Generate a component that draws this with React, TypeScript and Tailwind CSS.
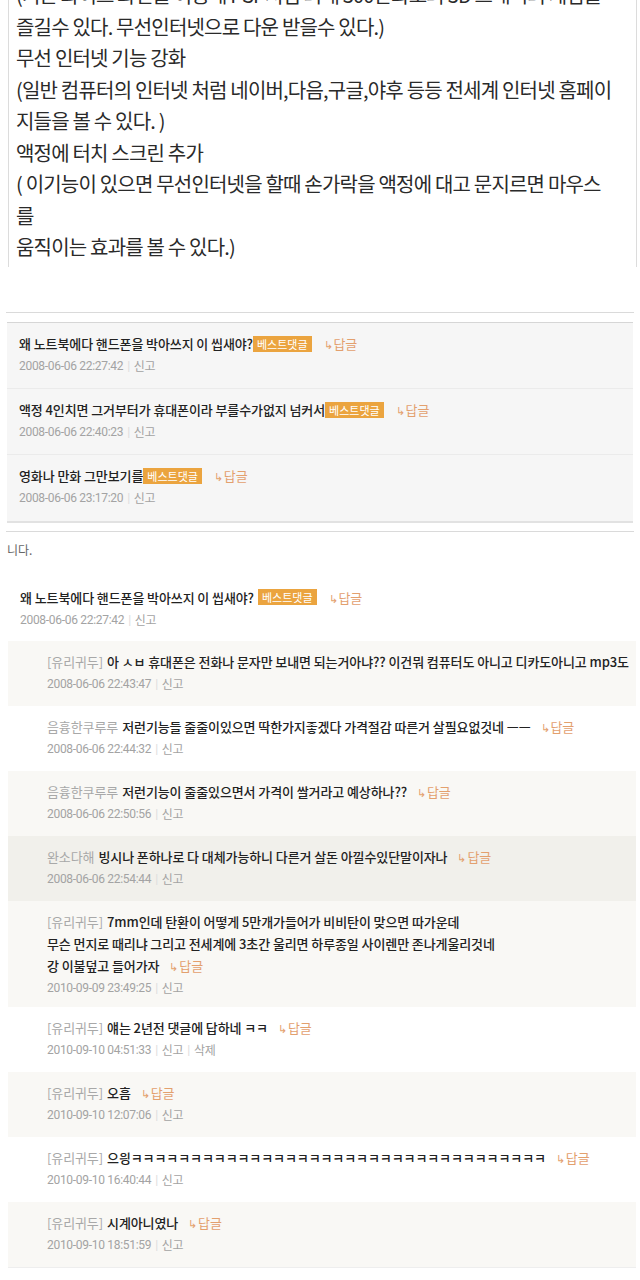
import React from "react";

const Badge = () => (
  <span className="inline-block bg-[#eba43f] text-white text-[11px] leading-[16px] px-[4px] font-normal tracking-[0px] align-[1px]">
    베스트댓글
  </span>
);

const ReplyLink = ({ ml = "ml-[12px]" }: { ml?: string }) => (
  <span className={`${ml} text-[#e3a06e] font-normal`}>
    <span className="text-[11px] mr-[1px]">↳</span>답글
  </span>
);

const DateLine = ({ date, del }: { date: string; del?: boolean }) => (
  <div className="h-[22px] flex items-center text-[12px] text-[#a3a3a3] font-['Roboto','Noto_Sans_CJK_KR',sans-serif] tracking-[-0.3px] whitespace-nowrap">
    {date}
    <span className="mx-[4px] text-[#dddddd]">|</span>
    <span className="font-['Noto_Sans_CJK_KR',sans-serif]">신고</span>
    {del && (
      <>
        <span className="mx-[4px] text-[#dddddd]">|</span>
        <span className="font-['Noto_Sans_CJK_KR',sans-serif]">삭제</span>
      </>
    )}
  </div>
);

type ReplyProps = {
  user: string;
  lines: string[];
  date: string;
  bg: string;
  del?: boolean;
  pb?: string;
};

const Reply = ({ user, lines, date, bg, del, pb = "pb-[11px]" }: ReplyProps) => (
  <div className={`${bg} pl-[39px] pt-[10px] ${pb} overflow-hidden`}>
    <div className="text-[13px] tracking-[-0.1px] whitespace-nowrap">
      {lines.map((l, i) => (
        <div key={i} className="h-[22px] flex items-center">
          {i === 0 && <span className="text-[#a8a8a8] font-normal mr-[4px]">{user}</span>}
          <span className="text-[#222] font-medium">{l}</span>
          {i === lines.length - 1 && <ReplyLink ml="ml-[10px]" />}
        </div>
      ))}
    </div>
    <DateLine date={date} del={del} />
  </div>
);

const GrayRow = ({ text, date, last }: { text: string; date: string; last?: boolean }) => (
  <div className={`pl-[12px] pt-[10px] h-[66px] ${last ? "" : "border-b border-[#ebebeb]"}`}>
    <div className="h-[22px] flex items-center text-[13px] tracking-[-0.1px] whitespace-nowrap text-[#222] font-medium">
      {text}
      <Badge />
      <ReplyLink />
    </div>
    <DateLine date={date} />
  </div>
);

export default function App() {
  const topLines = [
    "(기존 화이트 화면을 이용해 PSP처럼 최대 300만화소의 3D 그래픽의 게임을",
    "즐길수 있다. 무선인터넷으로 다운 받을수 있다.)",
    "무선 인터넷 기능 강화",
    "(일반 컴퓨터의 인터넷 처럼 네이버,다음,구글,야후 등등 전세계 인터넷 홈페이",
    "지들을 볼 수 있다. )",
    "액정에 터치 스크린 추가",
    "( 이기능이 있으면 무선인터넷을 할때 손가락을 액정에 대고 문지르면 마우스",
    "를",
    "움직이는 효과를 볼 수 있다.)",
  ];
  const kk = "ㅋ".repeat(35);
  return (
    <div className="w-[640px] h-[1280px] overflow-hidden bg-white font-['Noto_Sans_CJK_KR',sans-serif]">
      {/* article text box */}
      <div className="ml-[8px] w-[629px] h-[267px] border-x border-[#dcdcdc] overflow-hidden pl-[7px]">
        <div className="mt-[-21px] text-[20px] leading-[31.5px] text-[#2a2a2a] tracking-[-0.8px] whitespace-nowrap">
          {topLines.map((l, i) => (
            <div key={i}>{l}</div>
          ))}
        </div>
      </div>

      <div className="h-[45px]" />
      <div className="mx-[6px] h-[10px] border-t border-[#dadada]" />

      {/* best comments */}
      <div className="mx-[7px] border-t border-[#d6d6d6] bg-[#f6f6f6] border-b-2 border-b-[#e2e2e2]">
        <GrayRow text="왜 노트북에다 핸드폰을 박아쓰지 이 씹새야?" date="2008-06-06 22:27:42" />
        <GrayRow text="액정 4인치면 그거부터가 휴대폰이라 부를수가없지 넘커서" date="2008-06-06 22:40:23" />
        <GrayRow text="영화나 만화 그만보기를" date="2008-06-06 23:17:20" last />
      </div>

      <div className="mt-[8px] mx-[6px] border-t border-[#dadada]" />
      <div className="mt-[9px] pl-[7px] text-[12px] leading-[18px] text-[#666]">니다.</div>

      {/* comment */}
      <div className="mt-[18px] pl-[20px] pt-[10px] pb-[10px]">
        <div className="h-[22px] flex items-center text-[13px] tracking-[-0.1px] whitespace-nowrap text-[#222] font-medium">
          왜 노트북에다 핸드폰을 박아쓰지 이 씹새야?
          <span className="ml-[4px]">
            <Badge />
          </span>
          <ReplyLink />
        </div>
        <DateLine date="2008-06-06 22:27:42" />
      </div>

      {/* replies */}
      <div className="ml-[8px] mr-[4px]">
        <Reply
          bg="bg-[#f9f8f5]"
          user="[유리귀두]"
          lines={["아 ㅅㅂ 휴대폰은 전화나 문자만 보내면 되는거아냐?? 이건뭐 컴퓨터도 아니고 디카도아니고 mp3도"]}
          date="2008-06-06 22:43:47"
        />
        <Reply
          bg="bg-white"
          user="음흉한쿠루루"
          lines={["저런기능들 줄줄이있으면 딱한가지좋겠다 가격절감 따른거 살필요없것네 ㅡㅡ"]}
          date="2008-06-06 22:44:32"
        />
        <Reply
          bg="bg-[#f9f8f5]"
          user="음흉한쿠루루"
          lines={["저런기능이 줄줄있으면서 가격이 쌀거라고 예상하나??"]}
          date="2008-06-06 22:50:56"
        />
        <Reply
          bg="bg-[#f1f0eb]"
          user="완소다해"
          lines={["빙시나 폰하나로 다 대체가능하니 다른거 살돈 아낄수있단말이자나"]}
          date="2008-06-06 22:54:44"
        />
        <Reply
          bg="bg-[#f9f8f5]"
          user="[유리귀두]"
          lines={[
            "7mm인데 탄환이 어떻게 5만개가들어가 비비탄이 맞으면 따가운데",
            "무슨 먼지로 때리냐 그리고 전세계에 3초간 울리면 하루종일 사이렌만 존나게울리것네",
            "강 이불덮고 들어가자",
          ]}
          date="2010-09-09 23:49:25"
          pb="pb-[8px]"
        />
        <Reply
          bg="bg-white"
          user="[유리귀두]"
          lines={["얘는 2년전 댓글에 답하네 ㅋㅋ"]}
          date="2010-09-10 04:51:33"
          del
        />
        <Reply bg="bg-[#f9f8f5]" user="[유리귀두]" lines={["오흠"]} date="2010-09-10 12:07:06" />
        <Reply bg="bg-white" user="[유리귀두]" lines={["으읭" + kk]} date="2010-09-10 16:40:44" />
        <Reply bg="bg-[#f9f8f5]" user="[유리귀두]" lines={["시계아니였나"]} date="2010-09-10 18:51:59" />
        <div className="border-t border-[#eeeeee]" />
      </div>
    </div>
  );
}
